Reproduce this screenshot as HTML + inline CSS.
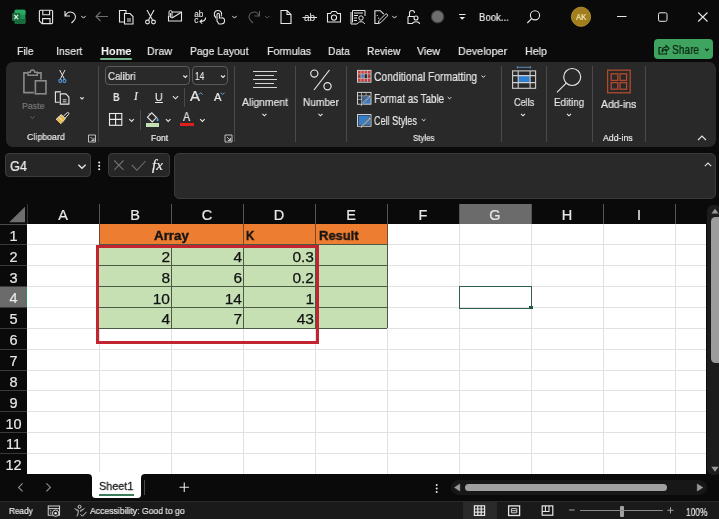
<!DOCTYPE html>
<html><head><meta charset="utf-8"><style>
html,body{margin:0;padding:0;}
body{width:719px;height:519px;overflow:hidden;position:relative;background:#0a0a0a;font-family:"Liberation Sans", sans-serif;}
.t{position:absolute;line-height:1;white-space:nowrap;will-change:transform;-webkit-text-stroke:0.2px currentColor;}
.r{position:absolute;}
svg{position:absolute;left:0;top:0;}
</style></head><body>
<div class="t" style="left:479.00px;top:12.41px;font-size:11.16px;color:#e8e8e8;font-weight:normal;transform:scaleX(0.860);transform-origin:0 0;">Book...</div>
<div class="t" style="left:576.00px;top:12.59px;font-size:8.84px;color:#f7ecc0;font-weight:normal;transform:scaleX(0.864);transform-origin:0 0;z-index:3">AK</div>
<div class="t" style="left:16.90px;top:44.82px;font-size:11.74px;color:#ececec;font-weight:normal;transform:scaleX(0.868);transform-origin:0 0;">File</div>
<div class="t" style="left:56.40px;top:44.82px;font-size:11.74px;color:#ececec;font-weight:normal;transform:scaleX(0.900);transform-origin:0 0;">Insert</div>
<div class="t" style="left:100.60px;top:44.82px;font-size:11.74px;color:#ffffff;font-weight:bold;transform:scaleX(0.935);transform-origin:0 0;-webkit-text-stroke:0px">Home</div>
<div class="t" style="left:147.00px;top:44.82px;font-size:11.74px;color:#ececec;font-weight:normal;transform:scaleX(0.912);transform-origin:0 0;">Draw</div>
<div class="t" style="left:189.50px;top:44.82px;font-size:11.74px;color:#ececec;font-weight:normal;transform:scaleX(0.888);transform-origin:0 0;">Page Layout</div>
<div class="t" style="left:266.70px;top:44.82px;font-size:11.74px;color:#ececec;font-weight:normal;transform:scaleX(0.901);transform-origin:0 0;">Formulas</div>
<div class="t" style="left:328.00px;top:44.82px;font-size:11.74px;color:#ececec;font-weight:normal;transform:scaleX(0.886);transform-origin:0 0;">Data</div>
<div class="t" style="left:366.70px;top:44.82px;font-size:11.74px;color:#ececec;font-weight:normal;transform:scaleX(0.865);transform-origin:0 0;">Review</div>
<div class="t" style="left:416.70px;top:44.82px;font-size:11.74px;color:#ececec;font-weight:normal;transform:scaleX(0.911);transform-origin:0 0;">View</div>
<div class="t" style="left:457.50px;top:44.82px;font-size:11.74px;color:#ececec;font-weight:normal;transform:scaleX(0.919);transform-origin:0 0;">Developer</div>
<div class="t" style="left:524.70px;top:44.82px;font-size:11.74px;color:#ececec;font-weight:normal;transform:scaleX(0.912);transform-origin:0 0;">Help</div>
<div class="r" style="left:100.2px;top:57.9px;width:31.6px;height:1.8px;background:#74b48c;border-radius:1px"></div>
<div class="r" style="left:654px;top:39.1px;width:58.9px;height:20.4px;background:#3ea45f;border-radius:4px"></div>
<div class="t" style="left:672.30px;top:44.70px;font-size:11.88px;color:#0a2412;font-weight:normal;transform:scaleX(0.854);transform-origin:0 0;">Share</div>
<div class="r" style="left:5.5px;top:61.8px;width:710.7px;height:84.8px;background:#292929;border-radius:7px"></div>
<div class="t" style="left:21.50px;top:100.52px;font-size:9.86px;color:#7a7a7a;font-weight:normal;transform:scaleX(0.894);transform-origin:0 0;">Paste</div>
<div class="t" style="left:27.40px;top:133.14px;font-size:9.13px;color:#e6e6e6;font-weight:normal;transform:scaleX(0.967);transform-origin:0 0;">Clipboard</div>
<div class="r" style="left:98px;top:66px;width:1px;height:76px;background:#4a4a4a;"></div>
<div class="r" style="left:105px;top:66px;width:85.4px;height:19.2px;background:transparent;border:1px solid #5a5a5a;border-radius:4px;box-sizing:border-box"></div>
<div class="t" style="left:107.50px;top:70.64px;font-size:11.01px;color:#e6e6e6;font-weight:normal;transform:scaleX(0.884);transform-origin:0 0;">Calibri</div>
<div class="r" style="left:192.4px;top:66px;width:35.6px;height:19.2px;background:transparent;border:1px solid #5a5a5a;border-radius:4px;box-sizing:border-box"></div>
<div class="t" style="left:195.20px;top:70.64px;font-size:11.01px;color:#e6e6e6;font-weight:normal;transform:scaleX(0.769);transform-origin:0 0;">14</div>
<div class="t" style="left:112.60px;top:91.64px;font-size:11.01px;color:#e6e6e6;font-weight:bold;transform:scaleX(0.820);transform-origin:0 0;-webkit-text-stroke:0px">B</div>
<div class="t" style="left:134.30px;top:91.42px;font-size:11.5px;color:#e6e6e6;font-weight:normal;font-style:italic;font-family:&quot;Liberation Serif&quot;,serif">I</div>
<div class="t" style="left:155.30px;top:91.64px;font-size:11.01px;color:#e6e6e6;font-weight:normal;transform:scaleX(0.958);transform-origin:0 0;">U</div>
<div class="r" style="left:155.2px;top:102px;width:7.8px;height:1px;background:#e6e6e6;"></div>
<div class="r" style="left:184.1px;top:88px;width:1px;height:19px;background:#4a4a4a;"></div>
<div class="t" style="left:190.00px;top:90.27px;font-size:13.91px;color:#e6e6e6;font-weight:normal;transform:scaleX(1.073);transform-origin:0 0;">A</div>
<div class="t" style="left:213.50px;top:93.23px;font-size:10.43px;color:#e6e6e6;font-weight:normal;transform:scaleX(1.073);transform-origin:0 0;">A</div>
<div class="r" style="left:139.8px;top:109.5px;width:1px;height:20.0px;background:#4a4a4a;"></div>
<div class="r" style="left:145.7px;top:122.7px;width:13.5px;height:4.2px;background:#c5dfb4;"></div>
<div class="t" style="left:182.80px;top:111.03px;font-size:12.32px;color:#e6e6e6;font-weight:normal;transform:scaleX(0.872);transform-origin:0 0;">A</div>
<div class="r" style="left:180px;top:122.9px;width:13.6px;height:3.4px;background:#e0201e;"></div>
<div class="t" style="left:151.40px;top:133.63px;font-size:8.55px;color:#e6e6e6;font-weight:normal;transform:scaleX(1.000);transform-origin:0 0;">Font</div>
<div class="r" style="left:234px;top:66px;width:1px;height:76px;background:#4a4a4a;"></div>
<div class="r" style="left:253px;top:70.5px;width:24px;height:1.1px;background:#d6d6d6;"></div>
<div class="r" style="left:254.5px;top:74.7px;width:19.0px;height:1.1px;background:#d6d6d6;"></div>
<div class="r" style="left:253px;top:78.9px;width:24px;height:1.1px;background:#d6d6d6;"></div>
<div class="r" style="left:254.5px;top:82.8px;width:19.0px;height:1.1px;background:#d6d6d6;"></div>
<div class="r" style="left:253px;top:87.0px;width:24px;height:1.1px;background:#d6d6d6;"></div>
<div class="t" style="left:241.90px;top:96.68px;font-size:10.72px;color:#e6e6e6;font-weight:normal;transform:scaleX(0.963);transform-origin:0 0;">Alignment</div>
<div class="r" style="left:295px;top:66px;width:1px;height:76px;background:#4a4a4a;"></div>
<div class="t" style="left:303.10px;top:96.68px;font-size:10.72px;color:#e6e6e6;font-weight:normal;transform:scaleX(0.942);transform-origin:0 0;">Number</div>
<div class="r" style="left:346px;top:66px;width:1px;height:76px;background:#4a4a4a;"></div>
<div class="t" style="left:374.30px;top:71.50px;font-size:11.88px;color:#e6e6e6;font-weight:normal;transform:scaleX(0.863);transform-origin:0 0;">Conditional Formatting</div>
<div class="t" style="left:374.30px;top:93.90px;font-size:11.88px;color:#e6e6e6;font-weight:normal;transform:scaleX(0.825);transform-origin:0 0;">Format as Table</div>
<div class="t" style="left:374.30px;top:115.90px;font-size:11.88px;color:#e6e6e6;font-weight:normal;transform:scaleX(0.764);transform-origin:0 0;">Cell Styles</div>
<div class="t" style="left:412.90px;top:133.84px;font-size:9.13px;color:#e6e6e6;font-weight:normal;transform:scaleX(0.864);transform-origin:0 0;">Styles</div>
<div class="r" style="left:501px;top:66px;width:1px;height:76px;background:#4a4a4a;"></div>
<div class="t" style="left:513.70px;top:96.74px;font-size:11.01px;color:#e6e6e6;font-weight:normal;transform:scaleX(0.824);transform-origin:0 0;">Cells</div>
<div class="r" style="left:546px;top:66px;width:1px;height:76px;background:#4a4a4a;"></div>
<div class="t" style="left:554.00px;top:96.74px;font-size:11.01px;color:#e6e6e6;font-weight:normal;transform:scaleX(0.899);transform-origin:0 0;">Editing</div>
<div class="r" style="left:592px;top:66px;width:1px;height:76px;background:#4a4a4a;"></div>
<div class="t" style="left:600.80px;top:98.98px;font-size:10.72px;color:#e6e6e6;font-weight:normal;transform:scaleX(0.971);transform-origin:0 0;">Add-ins</div>
<div class="t" style="left:603.40px;top:134.01px;font-size:8.70px;color:#e6e6e6;font-weight:normal;transform:scaleX(1.008);transform-origin:0 0;">Add-ins</div>
<div class="r" style="left:645px;top:66px;width:1px;height:76px;background:#4a4a4a;"></div>
<div class="r" style="left:5px;top:153.3px;width:86px;height:24.2px;background:#262626;border:1px solid #3c3c3c;border-radius:4px;box-sizing:border-box"></div>
<div class="t" style="left:10.00px;top:158.50px;font-size:14.35px;color:#ececec;font-weight:normal;transform:scaleX(0.882);transform-origin:0 0;">G4</div>
<div class="r" style="left:108px;top:153.3px;width:61.7px;height:24.2px;background:#262626;border:1px solid #3c3c3c;border-radius:4px;box-sizing:border-box"></div>
<div class="t" style="left:152.30px;top:157.85px;font-size:15px;color:#f0f0f0;font-weight:normal;font-family:&quot;Liberation Serif&quot;,serif;font-style:italic">fx</div>
<div class="r" style="left:173.8px;top:153.2px;width:542.5px;height:46px;background:#292929;border:1px solid #3a3a3a;border-radius:5px;box-sizing:border-box"></div>
<div class="r" style="left:0px;top:223.6px;width:27.4px;height:1px;background:#4a4a4a;"></div>
<div class="r" style="left:26.6px;top:204px;width:1px;height:20px;background:#333333;"></div>
<div class="r" style="left:459.4px;top:204px;width:72.0px;height:20px;background:#6b6b6b;"></div>
<div class="t" style="left:43.40px;top:207.98px;width:40px;text-align:center;font-size:14.5px;color:#e8e8e8">A</div>
<div class="t" style="left:115.40px;top:207.98px;width:40px;text-align:center;font-size:14.5px;color:#e8e8e8">B</div>
<div class="t" style="left:187.40px;top:207.98px;width:40px;text-align:center;font-size:14.5px;color:#e8e8e8">C</div>
<div class="t" style="left:259.40px;top:207.98px;width:40px;text-align:center;font-size:14.5px;color:#e8e8e8">D</div>
<div class="t" style="left:331.40px;top:207.98px;width:40px;text-align:center;font-size:14.5px;color:#e8e8e8">E</div>
<div class="t" style="left:403.40px;top:207.98px;width:40px;text-align:center;font-size:14.5px;color:#e8e8e8">F</div>
<div class="t" style="left:475.40px;top:207.98px;width:40px;text-align:center;font-size:14.5px;color:#e8e8e8">G</div>
<div class="t" style="left:547.40px;top:207.98px;width:40px;text-align:center;font-size:14.5px;color:#e8e8e8">H</div>
<div class="t" style="left:619.40px;top:207.98px;width:40px;text-align:center;font-size:14.5px;color:#e8e8e8">I</div>
<div class="r" style="left:98.9px;top:204px;width:1px;height:20px;background:#555555;"></div>
<div class="r" style="left:170.9px;top:204px;width:1px;height:20px;background:#555555;"></div>
<div class="r" style="left:242.9px;top:204px;width:1px;height:20px;background:#555555;"></div>
<div class="r" style="left:314.9px;top:204px;width:1px;height:20px;background:#555555;"></div>
<div class="r" style="left:386.9px;top:204px;width:1px;height:20px;background:#555555;"></div>
<div class="r" style="left:458.9px;top:204px;width:1px;height:20px;background:#555555;"></div>
<div class="r" style="left:530.9px;top:204px;width:1px;height:20px;background:#555555;"></div>
<div class="r" style="left:602.9px;top:204px;width:1px;height:20px;background:#555555;"></div>
<div class="r" style="left:674.9px;top:204px;width:1px;height:20px;background:#555555;"></div>
<div class="r" style="left:27.4px;top:224.0px;width:678.6px;height:250.3px;background:#ffffff;"></div>
<div class="r" style="left:27.4px;top:244.36px;width:678.6px;height:1px;background:#e1e1e1;"></div>
<div class="r" style="left:27.4px;top:265.22px;width:678.6px;height:1px;background:#e1e1e1;"></div>
<div class="r" style="left:27.4px;top:286.08px;width:678.6px;height:1px;background:#e1e1e1;"></div>
<div class="r" style="left:27.4px;top:306.94px;width:678.6px;height:1px;background:#e1e1e1;"></div>
<div class="r" style="left:27.4px;top:327.8px;width:678.6px;height:1px;background:#e1e1e1;"></div>
<div class="r" style="left:27.4px;top:348.66px;width:678.6px;height:1px;background:#e1e1e1;"></div>
<div class="r" style="left:27.4px;top:369.52px;width:678.6px;height:1px;background:#e1e1e1;"></div>
<div class="r" style="left:27.4px;top:390.38px;width:678.6px;height:1px;background:#e1e1e1;"></div>
<div class="r" style="left:27.4px;top:411.24px;width:678.6px;height:1px;background:#e1e1e1;"></div>
<div class="r" style="left:27.4px;top:432.1px;width:678.6px;height:1px;background:#e1e1e1;"></div>
<div class="r" style="left:27.4px;top:452.96px;width:678.6px;height:1px;background:#e1e1e1;"></div>
<div class="r" style="left:98.9px;top:224.0px;width:1px;height:250.3px;background:#e1e1e1;"></div>
<div class="r" style="left:170.9px;top:224.0px;width:1px;height:250.3px;background:#e1e1e1;"></div>
<div class="r" style="left:242.9px;top:224.0px;width:1px;height:250.3px;background:#e1e1e1;"></div>
<div class="r" style="left:314.9px;top:224.0px;width:1px;height:250.3px;background:#e1e1e1;"></div>
<div class="r" style="left:386.9px;top:224.0px;width:1px;height:250.3px;background:#e1e1e1;"></div>
<div class="r" style="left:458.9px;top:224.0px;width:1px;height:250.3px;background:#e1e1e1;"></div>
<div class="r" style="left:530.9px;top:224.0px;width:1px;height:250.3px;background:#e1e1e1;"></div>
<div class="r" style="left:602.9px;top:224.0px;width:1px;height:250.3px;background:#e1e1e1;"></div>
<div class="r" style="left:674.9px;top:224.0px;width:1px;height:250.3px;background:#e1e1e1;"></div>
<div class="r" style="left:0px;top:286.58px;width:26.8px;height:20.86px;background:#6b6b6b;"></div>
<div class="r" style="left:26px;top:286.58px;width:1.2px;height:20.86px;background:#2e8a57;"></div>
<div class="t" style="left:0px;top:228.78px;width:27px;text-align:center;font-size:14.5px;color:#e8e8e8">1</div>
<div class="t" style="left:0px;top:249.64px;width:27px;text-align:center;font-size:14.5px;color:#e8e8e8">2</div>
<div class="r" style="left:0px;top:244.36px;width:27px;height:1px;background:#3a3a3a;"></div>
<div class="t" style="left:0px;top:270.50px;width:27px;text-align:center;font-size:14.5px;color:#e8e8e8">3</div>
<div class="r" style="left:0px;top:265.22px;width:27px;height:1px;background:#3a3a3a;"></div>
<div class="t" style="left:0px;top:291.36px;width:27px;text-align:center;font-size:14.5px;color:#e8e8e8">4</div>
<div class="r" style="left:0px;top:286.08px;width:27px;height:1px;background:#3a3a3a;"></div>
<div class="t" style="left:0px;top:312.22px;width:27px;text-align:center;font-size:14.5px;color:#e8e8e8">5</div>
<div class="r" style="left:0px;top:306.94px;width:27px;height:1px;background:#3a3a3a;"></div>
<div class="t" style="left:0px;top:333.08px;width:27px;text-align:center;font-size:14.5px;color:#e8e8e8">6</div>
<div class="r" style="left:0px;top:327.8px;width:27px;height:1px;background:#3a3a3a;"></div>
<div class="t" style="left:0px;top:353.94px;width:27px;text-align:center;font-size:14.5px;color:#e8e8e8">7</div>
<div class="r" style="left:0px;top:348.66px;width:27px;height:1px;background:#3a3a3a;"></div>
<div class="t" style="left:0px;top:374.80px;width:27px;text-align:center;font-size:14.5px;color:#e8e8e8">8</div>
<div class="r" style="left:0px;top:369.52px;width:27px;height:1px;background:#3a3a3a;"></div>
<div class="t" style="left:0px;top:395.66px;width:27px;text-align:center;font-size:14.5px;color:#e8e8e8">9</div>
<div class="r" style="left:0px;top:390.38px;width:27px;height:1px;background:#3a3a3a;"></div>
<div class="t" style="left:0px;top:416.52px;width:27px;text-align:center;font-size:14.5px;color:#e8e8e8">10</div>
<div class="r" style="left:0px;top:411.24px;width:27px;height:1px;background:#3a3a3a;"></div>
<div class="t" style="left:0px;top:437.38px;width:27px;text-align:center;font-size:14.5px;color:#e8e8e8">11</div>
<div class="r" style="left:0px;top:432.1px;width:27px;height:1px;background:#3a3a3a;"></div>
<div class="t" style="left:0px;top:458.24px;width:27px;text-align:center;font-size:14.5px;color:#e8e8e8">12</div>
<div class="r" style="left:0px;top:452.96px;width:27px;height:1px;background:#3a3a3a;"></div>
<div class="r" style="left:99.4px;top:224.0px;width:288.0px;height:20.86px;background:#ed7d31;"></div>
<div class="r" style="left:98.9px;top:224.0px;width:1px;height:20.86px;background:#7a4a28;"></div>
<div class="r" style="left:242.9px;top:224.0px;width:1px;height:20.86px;background:#7a4a28;"></div>
<div class="r" style="left:314.9px;top:224.0px;width:1px;height:20.86px;background:#7a4a28;"></div>
<div class="r" style="left:386.9px;top:224.0px;width:1px;height:20.86px;background:#7a4a28;"></div>
<div class="r" style="left:99.4px;top:244.86px;width:288.0px;height:83.44px;background:#c6e0b4;"></div>
<div class="r" style="left:99.4px;top:265.22px;width:288.0px;height:1px;background:#4a5a44;"></div>
<div class="r" style="left:99.4px;top:286.08px;width:288.0px;height:1px;background:#4a5a44;"></div>
<div class="r" style="left:99.4px;top:306.94px;width:288.0px;height:1px;background:#4a5a44;"></div>
<div class="r" style="left:99.4px;top:327.8px;width:288.0px;height:1px;background:#4a5a44;"></div>
<div class="r" style="left:99.4px;top:244.36px;width:288.0px;height:1px;background:#4a5a44;"></div>
<div class="r" style="left:170.9px;top:244.86px;width:1px;height:83.44px;background:#4a5a44;"></div>
<div class="r" style="left:242.9px;top:244.86px;width:1px;height:83.44px;background:#4a5a44;"></div>
<div class="r" style="left:314.9px;top:244.86px;width:1px;height:83.44px;background:#4a5a44;"></div>
<div class="r" style="left:386.9px;top:244.86px;width:1px;height:83.44px;background:#4a5a44;"></div>
<div class="t" style="left:154.20px;top:229.11px;font-size:13.04px;color:#141414;font-weight:bold;transform:scaleX(1.026);transform-origin:0 0;-webkit-text-stroke:0.35px #141414">Array</div>
<div class="t" style="left:246.30px;top:228.87px;font-size:13.33px;color:#141414;font-weight:bold;transform:scaleX(0.854);transform-origin:0 0;-webkit-text-stroke:0.35px #141414">K</div>
<div class="t" style="left:318.90px;top:228.87px;font-size:13.33px;color:#141414;font-weight:bold;transform:scaleX(0.972);transform-origin:0 0;-webkit-text-stroke:0.35px #141414">Result</div>
<div class="t" style="left:109.60px;top:248.79px;width:60px;text-align:right;font-size:15.5px;color:#111;-webkit-text-stroke:0.25px #111">2</div>
<div class="t" style="left:181.60px;top:248.79px;width:60px;text-align:right;font-size:15.5px;color:#111;-webkit-text-stroke:0.25px #111">4</div>
<div class="t" style="left:253.60px;top:248.79px;width:60px;text-align:right;font-size:15.5px;color:#111;-webkit-text-stroke:0.25px #111">0.3</div>
<div class="t" style="left:109.60px;top:269.65px;width:60px;text-align:right;font-size:15.5px;color:#111;-webkit-text-stroke:0.25px #111">8</div>
<div class="t" style="left:181.60px;top:269.65px;width:60px;text-align:right;font-size:15.5px;color:#111;-webkit-text-stroke:0.25px #111">6</div>
<div class="t" style="left:253.60px;top:269.65px;width:60px;text-align:right;font-size:15.5px;color:#111;-webkit-text-stroke:0.25px #111">0.2</div>
<div class="t" style="left:109.60px;top:290.50px;width:60px;text-align:right;font-size:15.5px;color:#111;-webkit-text-stroke:0.25px #111">10</div>
<div class="t" style="left:181.60px;top:290.50px;width:60px;text-align:right;font-size:15.5px;color:#111;-webkit-text-stroke:0.25px #111">14</div>
<div class="t" style="left:253.60px;top:290.50px;width:60px;text-align:right;font-size:15.5px;color:#111;-webkit-text-stroke:0.25px #111">1</div>
<div class="t" style="left:109.60px;top:311.37px;width:60px;text-align:right;font-size:15.5px;color:#111;-webkit-text-stroke:0.25px #111">4</div>
<div class="t" style="left:181.60px;top:311.37px;width:60px;text-align:right;font-size:15.5px;color:#111;-webkit-text-stroke:0.25px #111">7</div>
<div class="t" style="left:253.60px;top:311.37px;width:60px;text-align:right;font-size:15.5px;color:#111;-webkit-text-stroke:0.25px #111">43</div>
<div class="r" style="left:96.3px;top:244.8px;width:222.7px;height:98.8px;background:transparent;border:3px solid #c22430;box-sizing:border-box"></div>
<div class="r" style="left:458.5px;top:286px;width:73.4px;height:22.6px;background:transparent;border:1.9px solid #2f604a;box-sizing:border-box"></div>
<div class="r" style="left:529.4px;top:305.6px;width:3.6px;height:3.4px;background:#24583f;"></div>
<div class="r" style="left:707.3px;top:204.8px;width:14px;height:270.5px;background:#1c1c1c;border-radius:6px"></div>
<div class="r" style="left:710.8px;top:217.2px;width:12px;height:146.3px;background:#9c9c9c;border-radius:4.5px"></div>
<div class="r" style="left:91.7px;top:472px;width:49.4px;height:26px;background:#ffffff;border-radius:0 0 3.5px 3.5px"></div>
<div class="r" style="left:87.7px;top:474.3px;width:4px;height:4px;background:#ffffff;"></div>
<div class="r" style="left:141.1px;top:474.3px;width:4px;height:4px;background:#ffffff;"></div>
<div class="r" style="left:83.7px;top:474.3px;width:8px;height:8px;background:#0a0a0a;border-radius:4px"></div>
<div class="r" style="left:141.1px;top:474.3px;width:8px;height:8px;background:#0a0a0a;border-radius:4px"></div>
<div class="t" style="left:98.90px;top:480.64px;font-size:11.59px;color:#1a1a1a;font-weight:normal;transform:scaleX(0.936);transform-origin:0 0;-webkit-text-stroke:0.3px #1a1a1a">Sheet1</div>
<div class="r" style="left:98.9px;top:494.1px;width:35px;height:1.7px;background:#3b7d5a;"></div>
<div class="r" style="left:143.6px;top:480.2px;width:1.3px;height:15px;background:#4a4a4a;"></div>
<div class="r" style="left:450.7px;top:480.3px;width:256.1px;height:14.6px;background:#171717;border-radius:7.3px"></div>
<div class="r" style="left:464.6px;top:484px;width:202.8px;height:7px;background:#a0a0a0;border-radius:3.5px"></div>
<div class="r" style="left:0px;top:500.6px;width:719px;height:18.4px;background:#1a1a1a;"></div>
<div class="r" style="left:0px;top:500.6px;width:719px;height:1px;background:#2a2a2a;"></div>
<div class="t" style="left:8.60px;top:507.01px;font-size:8.70px;color:#e6e6e6;font-weight:normal;transform:scaleX(0.943);transform-origin:0 0;">Ready</div>
<div class="t" style="left:89.60px;top:506.49px;font-size:9.42px;color:#e6e6e6;font-weight:normal;transform:scaleX(0.919);transform-origin:0 0;">Accessibility: Good to go</div>
<div class="r" style="left:462.8px;top:501px;width:34.1px;height:18px;background:#2a2a2a;"></div>
<div class="r" style="left:619.6px;top:505.5px;width:4.5px;height:11px;background:#a0a0a0;border-radius:1px"></div>
<div class="t" style="left:685.60px;top:507.83px;font-size:10.43px;color:#e6e6e6;font-weight:normal;transform:scaleX(0.801);transform-origin:0 0;">100%</div>
<svg width="719" height="519" viewBox="0 0 719 519"><rect x="14.6" y="9.8" width="10.8" height="13.9" rx="1.3" fill="#1f8f50"/>
<rect x="14.6" y="9.8" width="10.8" height="4.6" rx="1.3" fill="#2aa862"/>
<rect x="14.6" y="12.5" width="10.8" height="2" fill="#2aa862"/>
<rect x="14.6" y="19" width="10.8" height="4.7" rx="1.3" fill="#176b3c"/>
<rect x="14.6" y="19" width="10.8" height="2" fill="#176b3c"/>
<rect x="12" y="13" width="8.4" height="8" rx="0.8" fill="#1a6b40"/>
<path d="M14.3 14.9 L18.1 19.1 M18.1 14.9 L14.3 19.1" stroke="#d8f5de" stroke-width="1.3"/>
<path d="M40.5 10.3 H51.5 A1 1 0 0 1 52.6 11.3 V22.6 A1 1 0 0 1 51.5 23.6 H42 L39.4 21 V11.3 A1 1 0 0 1 40.5 10.3 Z" fill="none" stroke="#e6e6e6" stroke-width="1.1"/>
<path d="M42.8 10.5 V14.8 H49.6 V10.5 M42.6 23.5 V18.6 H50 V23.5" fill="none" stroke="#e6e6e6" stroke-width="1.1"/>
<path d="M65 11 V16 H70 M65.3 15.8 C67 12.5 70 11.5 72.5 12.5 C76 14 76.5 18.5 73.5 21 L71.5 23" fill="none" stroke="#e6e6e6" stroke-width="1.1"/>
<path d="M81.3 15.9 L83.5 18.1 L85.7 15.9" fill="none" stroke="#e6e6e6" stroke-width="1"/>
<path d="M96 16.5 H108 M100.5 12 L96 16.5 L100.5 21" fill="none" stroke="#6e6e6e" stroke-width="1.1"/>
<path d="M126 13 V10.5 H119.5 V22 H124" fill="none" stroke="#e6e6e6" stroke-width="1.1"/>
<path d="M124.5 13.5 H130 L133 16.5 V24 H124.5 Z" fill="none" stroke="#e6e6e6" stroke-width="1.1"/>
<path d="M127 19 H131 M127 21 H131" stroke="#e6e6e6" stroke-width="1"/>
<path d="M147 10 L152.5 20 M154 10 L148.5 20" fill="none" stroke="#e6e6e6" stroke-width="1.1"/>
<circle cx="147.5" cy="22" r="1.9" fill="none" stroke="#e6e6e6" stroke-width="1.1"/><circle cx="153.5" cy="22" r="1.9" fill="none" stroke="#e6e6e6" stroke-width="1.1"/>
<path d="M172 12 H181.5 V21 H168.5 V16" fill="none" stroke="#e6e6e6" stroke-width="1.1"/>
<path d="M172 18 L181 12.5" fill="none" stroke="#e6e6e6" stroke-width="1.1"/>
<path d="M169 17 V12 A1.5 1.5 0 0 1 172 12 V17 A0.8 0.8 0 0 1 170.4 17 V13" fill="none" stroke="#e6e6e6" stroke-width="1"/>
<text x="194.3" y="16.9" font-size="8.2" fill="#e6e6e6" font-family="Liberation Sans" stroke="#e6e6e6" stroke-width="0.1">ab</text>
<text x="194.2" y="23" font-size="8.2" fill="#e6e6e6" font-family="Liberation Sans" stroke="#e6e6e6" stroke-width="0.1">c</text>
<path d="M205.6 17.6 C205.6 20.5 204 21.6 200.2 21.6 M202.2 19.6 L200 21.6 L202.2 23.6" fill="none" stroke="#e6e6e6" stroke-width="1.1"/>
<path d="M216 18 C213 15 214 10.5 218 10.5 C221.5 10.5 222.5 14 221 16.5" fill="none" stroke="#e6e6e6" stroke-width="1.1"/>
<path d="M217 21 V14.5 A1.2 1.2 0 0 1 219.4 14.5 V18 H221.5 A2.2 2.2 0 0 1 224.5 20 V21 C224.5 23 223 24 221 24 H219 Z" fill="none" stroke="#e6e6e6" stroke-width="1.1"/>
<path d="M232.3 15.9 L234.5 18.1 L236.7 15.9" fill="none" stroke="#e6e6e6" stroke-width="1"/>
<path d="M259.5 11 V16 H254.5 M259.2 15.8 C257.5 12.5 254.5 11.5 252 12.5 C248.5 14 248 18.5 251 21 L253 23" fill="none" stroke="#5a5a5a" stroke-width="1.1"/>
<path d="M265 15.9 L267.2 18.1 L269.4 15.9" fill="none" stroke="#5a5a5a" stroke-width="1"/>
<path d="M281 10.5 H287 L291 14.5 V23.5 H281 Z M287 10.5 V14.5 H291" fill="none" stroke="#e6e6e6" stroke-width="1.1"/>
<text x="304" y="21" font-size="10" fill="#e6e6e6" font-family="Liberation Sans">ab</text>
<path d="M302.5 17.5 H317" stroke="#e6e6e6" stroke-width="1"/>
<path d="M327.5 13.5 H330.5 L332 11.5 H336 L337.5 13.5 H340.5 V22 H327.5 Z" fill="none" stroke="#e6e6e6" stroke-width="1.1"/><circle cx="334" cy="17.6" r="2.6" fill="none" stroke="#e6e6e6" stroke-width="1.1"/>
<path d="M352.5 22.5 V10.5 H365 V16 M351 12 V24 H357" fill="none" stroke="#e6e6e6" stroke-width="1"/>
<path d="M354 13 H363 M354 15.5 H358 M354 18 H357 M354 20.5 H357" stroke="#e6e6e6" stroke-width="1"/>
<circle cx="361" cy="18" r="2.2" fill="none" stroke="#e6e6e6" stroke-width="1"/><path d="M357.5 24 C357.5 21 364.5 21 364.5 24" fill="none" stroke="#e6e6e6" stroke-width="1"/>
<path d="M383.8 14.2 L380.3 10.7 H374.9 V23.5 H378" fill="none" stroke="#e6e6e6" stroke-width="1.1"/><path d="M378.3 23.6 L379 20.6 L385.3 14.3 A1.2 1.2 0 0 1 387.2 16.2 L380.9 22.5 Z" fill="none" stroke="#e6e6e6" stroke-width="1"/><circle cx="377.3" cy="15.5" r="0.6" fill="#e6e6e6"/><circle cx="378.6" cy="18.2" r="0.6" fill="#e6e6e6"/>
<path d="M392.3 15.9 L394.5 18.1 L396.7 15.9" fill="none" stroke="#e6e6e6" stroke-width="1"/>
<path d="M408 16.5 H414 M408 16.5 V23.5 H412 M409.5 16.5 V13 A2.5 2.5 0 0 1 414.5 13" fill="none" stroke="#e6e6e6" stroke-width="1.1"/><circle cx="416" cy="18" r="2" fill="none" stroke="#e6e6e6" stroke-width="1.1"/><path d="M412.5 24 C412.5 21 419.5 21 419.5 24" fill="none" stroke="#e6e6e6" stroke-width="1.1"/>
<circle cx="437.6" cy="16.7" r="6.2" fill="#6e6e6e" stroke="#3c3c3c" stroke-width="1.2"/>
<path d="M459 14.5 H465.5" stroke="#e6e6e6" stroke-width="1"/><path d="M459.5 17 L462.2 19.8 L465 17 Z" fill="#e6e6e6"/>
<circle cx="535" cy="15.3" r="4.6" fill="none" stroke="#e6e6e6" stroke-width="1.1"/><path d="M531.7 18.6 L527.3 23" stroke="#e6e6e6" stroke-width="1.1"/>
<circle cx="581" cy="16.75" r="9.6" fill="#a37e1c" stroke="#b8943a" stroke-width="0.9"/>
<path d="M617 16.5 H626.5" stroke="#e6e6e6" stroke-width="1"/>
<rect x="658.5" y="12.8" width="8.5" height="8.5" rx="1.5" fill="none" stroke="#e6e6e6" stroke-width="1"/>
<path d="M698.2 12.5 L707.5 21.5 M707.5 12.5 L698.2 21.5" stroke="#e6e6e6" stroke-width="1.1"/>
<path d="M661.5 47.5 H659 V54 H666.5 V52.5" fill="none" stroke="#0a2412" stroke-width="1.2"/><path d="M662 52 C662 48.5 663.5 47.3 666 47.3 V45.3 L669 48.3 L666 51.3 V49.4 C664.3 49.4 663 50.2 662 52 Z" fill="none" stroke="#0a2412" stroke-width="1.1" stroke-linejoin="round"/>
<path d="M705.2 48.6 L706.9 50.6 L708.6 48.6" fill="none" stroke="#0a2412" stroke-width="1.1"/>
<path d="M27.6 72.9 H23.9 V92.6 H33.8" fill="none" stroke="#8a8a8a" stroke-width="1.6"/><path d="M37.6 72.9 H41 V79.5" fill="none" stroke="#8a8a8a" stroke-width="1.6"/>
<path d="M28 75.3 V72.2 H30.3 A2.2 2.2 0 0 1 34.7 72.2 H37.3 V75.3 Z" fill="none" stroke="#8a8a8a" stroke-width="1.4"/>
<rect x="35.4" y="80.8" width="10.6" height="13" fill="none" stroke="#8a8a8a" stroke-width="1.6"/>
<path d="M30.5 116.5 L32.5 118.5 L34.5 116.5" fill="none" stroke="#6a6a6a" stroke-width="1"/>
<path d="M59.7 70 L64.3 78.8 M65 70 L60.4 78.8" fill="none" stroke="#e6e6e6" stroke-width="1"/>
<circle cx="60.3" cy="80.9" r="1.5" fill="none" stroke="#4e9ad8" stroke-width="1.1"/><circle cx="64.5" cy="80.9" r="1.5" fill="none" stroke="#4e9ad8" stroke-width="1.1"/>
<path d="M60.5 92.3 V91.9 H55.4 V102.2 H59.5" fill="none" stroke="#e6e6e6" stroke-width="1.1"/><path d="M60.3 93.9 H65.8 L68.9 97 V104.1 H60.3 Z" fill="none" stroke="#e6e6e6" stroke-width="1.1"/><path d="M62.8 99.8 H66.4 M62.8 101.8 H66.4" stroke="#e6e6e6" stroke-width="0.9"/>
<path d="M80.3 97.3 L82 99 L83.7 97.3" fill="none" stroke="#e6e6e6" stroke-width="1.2"/>
<path d="M56.2 119.2 L61.3 114.6 L65.5 118.8 L60.6 123.6 Z" fill="#e8b84a"/>
<path d="M56.2 119.2 L61.3 114.6" stroke="#3a3a3a" stroke-width="0"/>
<path d="M56.2 119.2 L61.3 114.6 L65.5 118.8 L60.6 123.6 Z M58.5 117.2 L63.2 121.5" fill="none" stroke="#e6e6e6" stroke-width="1"/>
<path d="M57 119.5 L60.8 123 L63 121" fill="none" stroke="#e8b84a" stroke-width="1.4"/>
<path d="M63.4 116.2 L67.3 112.6 A1.1 1.1 0 0 1 68.8 114.1 L65.3 118" fill="none" stroke="#e6e6e6" stroke-width="1"/>
<path d="M88.5 142 V135 H95.5 V142 Z" fill="none" stroke="#cfcfcf" stroke-width="0.9"/><path d="M90.5 137 L94.0 140.5 M94.0 137.8 V140.5 H91.3" fill="none" stroke="#cfcfcf" stroke-width="0.9"/>
<path d="M183.3 75.5 L185.3 77.5 L187.3 75.5" fill="none" stroke="#e6e6e6" stroke-width="1.1"/>
<path d="M221 75.5 L223 77.5 L225 75.5" fill="none" stroke="#e6e6e6" stroke-width="1.1"/>
<path d="M172.9 96.2 L175.5 98.8 L178.1 96.2" fill="none" stroke="#e6e6e6" stroke-width="1.1"/>
<path d="M198.8 94.6 L200.7 92.7 L202.6 94.6" fill="none" stroke="#5aa7e0" stroke-width="1"/>
<path d="M220.8 92.6 L222.7 94.5 L224.6 92.6" fill="none" stroke="#5aa7e0" stroke-width="1"/>
<rect x="109.5" y="113.5" width="12.3" height="11.8" fill="none" stroke="#ececec" stroke-width="1.1"/><path d="M115.6 113.5 V125.3 M109.5 119.4 H121.8" stroke="#ececec" stroke-width="1.1"/>
<path d="M129.29999999999998 119.14999999999999 L131.6 121.45 L133.9 119.14999999999999" fill="none" stroke="#e6e6e6" stroke-width="1.1"/>
<path d="M147.5 117.2 L151.8 112.9 L156.5 117.6 L152.2 121.9 Z" fill="none" stroke="#e6e6e6" stroke-width="1.1"/><path d="M150.2 114.6 L149 113.4" stroke="#e6e6e6" stroke-width="1"/><path d="M157.2 117.3 C158.4 118.9 159 119.8 158.5 120.8 A1.1 1.1 0 0 1 156.5 120.3 Z" fill="#4ea0e0"/>
<path d="M165.89999999999998 119.14999999999999 L168.2 121.45 L170.5 119.14999999999999" fill="none" stroke="#e6e6e6" stroke-width="1.1"/>
<path d="M200.1 119.14999999999999 L202.4 121.45 L204.70000000000002 119.14999999999999" fill="none" stroke="#e6e6e6" stroke-width="1.1"/>
<path d="M225 142 V135 H232 V142 Z" fill="none" stroke="#cfcfcf" stroke-width="0.9"/><path d="M227 137 L230.5 140.5 M230.5 137.8 V140.5 H227.8" fill="none" stroke="#cfcfcf" stroke-width="0.9"/>
<path d="M262.4 113.8 L264.4 115.8 L266.4 113.8" fill="none" stroke="#e6e6e6" stroke-width="1.1"/>
<circle cx="314.3" cy="73.6" r="3.6" fill="none" stroke="#e6e6e6" stroke-width="1.2"/><circle cx="327.5" cy="86.2" r="3.6" fill="none" stroke="#e6e6e6" stroke-width="1.2"/><path d="M329.5 70 L314 90" stroke="#e6e6e6" stroke-width="1.2"/>
<path d="M318.5 113.8 L320.5 115.8 L322.5 113.8" fill="none" stroke="#e6e6e6" stroke-width="1.1"/>
<rect x="358" y="70.9" width="12.5" height="3" fill="#d63a3a"/><rect x="358" y="78.4" width="12.5" height="3" fill="#d63a3a"/><rect x="361" y="73.9" width="3" height="4.5" fill="#3f7fc0"/><rect x="358" y="73.9" width="3" height="4.5" fill="#a83a3a"/><rect x="367.5" y="73.9" width="3" height="4.5" fill="#a83a3a"/>
<path d="M357.5 73.9 H371 M357.5 78.4 H371 M361 70.4 V81.9 M364.2 70.4 V81.9 M367.5 70.4 V81.9" stroke="#bdbdbd" stroke-width="0.8"/>
<rect x="357.5" y="70.4" width="13.5" height="11.8" fill="none" stroke="#d0d0d0" stroke-width="1"/>
<path d="M481.59999999999997 75.6 L483.4 77.4 L485.2 75.6" fill="none" stroke="#e6e6e6" stroke-width="1"/>
<path d="M362 103.9 L370.5 95.4 V103.9 Z" fill="#3a7cc4"/><rect x="362" y="96.4" width="8.5" height="7.5" fill="#3a7cc4" opacity="0.75"/>
<path d="M357.5 95.9 H371 M357.5 99.4 H362 M361.5 92.4 V103.9 M366 92.4 V95.9" stroke="#bdbdbd" stroke-width="0.8"/>
<rect x="357.5" y="92.4" width="13.5" height="11.8" fill="none" stroke="#d0d0d0" stroke-width="1"/>
<path d="M360 104.7 L369.8 94.9 L371.2 96.30000000000001 L361.4 105.9 Z" fill="#e6e6e6" stroke="#2a2a2a" stroke-width="0.6"/><path d="M362 104.10000000000001 L369.5 96.60000000000001" stroke="#3a7cc4" stroke-width="0.9"/>
<path d="M447.7 97.1 L449.5 98.9 L451.3 97.1" fill="none" stroke="#e6e6e6" stroke-width="1"/>
<rect x="358.5" y="115.5" width="11.5" height="9.5" fill="#3a7cc4"/>
<rect x="357.5" y="114.5" width="13.5" height="11.8" fill="none" stroke="#d0d0d0" stroke-width="1"/>
<path d="M360 126.8 L369.8 117 L371.2 118.4 L361.4 128 Z" fill="#e6e6e6" stroke="#2a2a2a" stroke-width="0.6"/><path d="M362 126.2 L369.5 118.7" stroke="#3a7cc4" stroke-width="0.9"/>
<path d="M421.9 119.1 L423.7 120.9 L425.5 119.1" fill="none" stroke="#e6e6e6" stroke-width="1"/>
<rect x="518.3" y="76" width="11.8" height="6.3" fill="#2f80d0"/>
<rect x="512.6" y="70.9" width="23" height="17.4" fill="none" stroke="#cfcfcf" stroke-width="1.1"/><path d="M512.6 75.6 H535.6 M512.6 82.6 H535.6 M518.2 70.9 V88.3 M530.1 70.9 V88.3" stroke="#cfcfcf" stroke-width="1.1"/>
<path d="M517.3 67.3 H530.3 M517.3 66 V68.6 M530.3 66 V68.6" stroke="#5a9ad0" stroke-width="0.9"/>
<path d="M521 113.8 L523 115.8 L525 113.8" fill="none" stroke="#e6e6e6" stroke-width="1.1"/>
<circle cx="572.2" cy="77" r="8.5" fill="none" stroke="#e6e6e6" stroke-width="1.15"/><path d="M566.2 83.2 L557 92.3" stroke="#e6e6e6" stroke-width="1.15"/>
<path d="M567 113.8 L569 115.8 L571 113.8" fill="none" stroke="#e6e6e6" stroke-width="1.1"/>
<rect x="607.6" y="70.2" width="22.6" height="22.6" fill="none" stroke="#b34a2e" stroke-width="1.3"/><rect x="611.2" y="73.8" width="6.6" height="6.6" fill="none" stroke="#b34a2e" stroke-width="1.3"/><rect x="620" y="73.8" width="6.6" height="6.6" fill="none" stroke="#b34a2e" stroke-width="1.3"/><rect x="611.2" y="82.6" width="6.6" height="6.6" fill="none" stroke="#b34a2e" stroke-width="1.3"/><rect x="620" y="82.6" width="6.6" height="6.6" fill="none" stroke="#b34a2e" stroke-width="1.3"/>
<path d="M698 140 L702 136 L706 140" fill="none" stroke="#e6e6e6" stroke-width="1.1"/>
<path d="M78.4 164.7 L82 168.3 L85.6 164.7" fill="none" stroke="#e8e8e8" stroke-width="1.3"/>
<circle cx="99.2" cy="162.5" r="1.05" fill="#e6e6e6"/><circle cx="99.2" cy="165.9" r="1.05" fill="#e6e6e6"/><circle cx="99.2" cy="169.3" r="1.05" fill="#e6e6e6"/>
<path d="M114.3 160.5 L123.5 169.8 M123.5 160.5 L114.3 169.8" stroke="#707070" stroke-width="1.1"/><path d="M131.8 165 L137 170.3 L145.5 161" fill="none" stroke="#707070" stroke-width="1.1"/>
<path d="M704.8 166.2 L708 163 L711.2 166.2" fill="none" stroke="#e0e0e0" stroke-width="1.1"/>
<path d="M9.2 222.3 L25 222.3 L25 206.7 Z" fill="#6e6e6e"/>
<path d="M711.5 213.5 L715 208.8 L718.5 213.5 Z" fill="#9a9a9a"/>
<path d="M711.3 466.8 L715 471.8 L718.7 466.8 Z" fill="#9a9a9a"/>
<path d="M22.6 483.4 L18.6 487.4 L22.6 491.4" fill="none" stroke="#8c8c8c" stroke-width="1.2"/><path d="M46.4 483.4 L50.4 487.4 L46.4 491.4" fill="none" stroke="#8c8c8c" stroke-width="1.2"/>
<path d="M179.5 487.3 H189 M184.25 482.5 V492" stroke="#e6e6e6" stroke-width="1.1"/>
<circle cx="436.7" cy="485" r="1" fill="#e6e6e6"/><circle cx="436.7" cy="488.5" r="1" fill="#e6e6e6"/><circle cx="436.7" cy="492" r="1" fill="#e6e6e6"/>
<path d="M459.8 484 L454.6 487.5 L459.8 491 Z" fill="#9a9a9a" stroke="#9a9a9a" stroke-width="0.6" stroke-linejoin="round"/><path d="M697.3 484 L702.8 487.5 L697.3 491 Z" fill="#9a9a9a" stroke="#9a9a9a" stroke-width="0.6" stroke-linejoin="round"/>
<rect x="48.2" y="506" width="11.4" height="9.2" fill="none" stroke="#e6e6e6" stroke-width="0.9"/><path d="M48.2 508.6 H59.6 M49.8 510.8 H51.4 M49.8 513 H51.4" stroke="#e6e6e6" stroke-width="0.9"/><circle cx="55.6" cy="513.2" r="3.2" fill="#1a1a1a" stroke="#e6e6e6" stroke-width="0.9"/><circle cx="55.6" cy="513.2" r="1.3" fill="#e6e6e6"/>
<circle cx="79.5" cy="506.8" r="1.5" fill="none" stroke="#e6e6e6" stroke-width="0.9"/><path d="M74.7 508.2 Q75.5 510.3 78.2 510.2 V512.6 Q78 514.6 76.8 516.3 M84.3 508.2 Q83.5 510.3 80.8 510.2 V511.8" fill="none" stroke="#e6e6e6" stroke-width="0.9"/><path d="M80.6 514.3 L82.4 516.2 L86.5 511.9" fill="none" stroke="#e6e6e6" stroke-width="0.9"/>
<rect x="474.4" y="505.8" width="10.2" height="9.6" fill="none" stroke="#e6e6e6" stroke-width="1.2"/><path d="M477.8 505.8 V515.4 M481.2 505.8 V515.4 M474.4 509 H484.6 M474.4 512.2 H484.6" stroke="#e6e6e6" stroke-width="1.2"/>
<rect x="508.6" y="505.9" width="11" height="9.6" fill="none" stroke="#e6e6e6" stroke-width="1.3"/><path d="M511.6 508.6 H516.6 M511.6 510.7 H516.6 M511.6 512.8 H516.6" stroke="#e6e6e6" stroke-width="0.9"/><path d="M511.4 508.6 V512.8 M516.8 508.6 V512.8" stroke="#e6e6e6" stroke-width="0.9"/>
<rect x="542.2" y="505.9" width="10.6" height="9.3" fill="none" stroke="#e6e6e6" stroke-width="1.2"/><path d="M542.2 511.5 H549 V505.9 M545.4 505.9 V511.5" fill="none" stroke="#e6e6e6" stroke-width="1.1"/>
<path d="M569 510 H574.7" stroke="#a0a0a0" stroke-width="1"/><path d="M580 510.5 H663" stroke="#8a8a8a" stroke-width="1.2"/><path d="M667.4 510.3 H673.6 M670.5 507.2 V513.4" stroke="#a0a0a0" stroke-width="1"/></svg>
</body></html>
